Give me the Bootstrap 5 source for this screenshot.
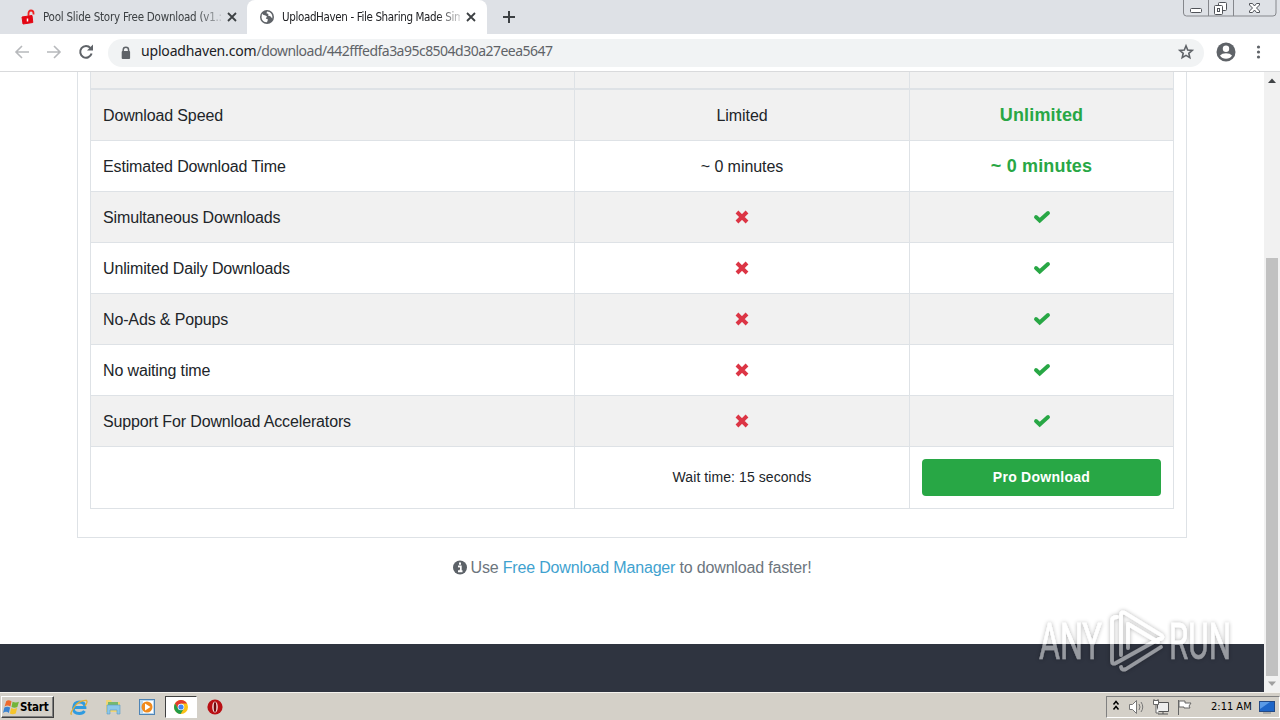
<!DOCTYPE html>
<html lang="en">
<head>
<meta charset="utf-8">
<meta name="viewport" content="width=device-width, initial-scale=1">
<title>UploadHaven - File Sharing Made Simple</title>
<link rel="stylesheet" href="https://cdn.jsdelivr.net/npm/bootstrap@5.3.0/dist/css/bootstrap.min.css">
<style>
body{width:1280px;height:720px;overflow:hidden;font-family:"Liberation Sans",Arial,sans-serif;font-size:16px;line-height:1.5;color:#212529;background:#fff}
svg{display:block;flex:none}
.tabstrip{height:34px;background:#dee1e6;font:11.5px/34px "DejaVu Sans Condensed",Tahoma,sans-serif;color:#3c4043}
.tab-off{width:247px;padding-left:21px}
.tab-on{width:240px;background:#fff;border-radius:8px 8px 0 0;padding-left:13px;color:#202124}
.tab-label{width:178px;white-space:nowrap;-webkit-mask-image:linear-gradient(90deg,#000 155px,transparent 184px);mask-image:linear-gradient(90deg,#000 155px,transparent 184px)}
.l1{letter-spacing:-.23px}.l2{letter-spacing:-.36px}
.toolbar{height:38px;border-bottom:1px solid #d9dadc;background:#fff}
.omnibox{width:1096px;height:28px;border-radius:14px;background:#f1f3f4;font:14px/28px "Noto Sans",Tahoma,sans-serif;color:#5f6368;letter-spacing:-.52px}
.omnibox b{font-weight:400;color:#202124;letter-spacing:-.17px}
.url{padding:0 0 0 1px;line-height:26px}
.page{height:620px}
.view{width:1264px;overflow:hidden}
.panel{width:1110px;margin-left:77px;border:1px solid #dee2e6;border-top:0;padding:0 12px 28px}
.plans{width:1084px;table-layout:fixed;border-collapse:separate;border-spacing:0;border-left:1px solid #dee2e6;color:#212529}
.plans td,.plans th{border-right:1px solid #dee2e6;border-bottom:1px solid #dee2e6;padding:1px 12px 0;height:51px;line-height:49px;text-align:center;font-weight:400;letter-spacing:-.05px}
.plans th{height:18px;border-bottom-width:2px;background:#f1f1f1;padding:0;line-height:10px}
.plans td:first-child{text-align:left;letter-spacing:-.14px}
.plans tbody tr:nth-child(odd) td{background:#f1f1f1}
.plans .fin td{height:62px;background:#fff;font-size:14px;line-height:20px;letter-spacing:.08px;padding-top:0}
.plans .fin td:nth-child(2){padding-bottom:1px}
.plans td.pro{font-size:18px;font-weight:700;color:#28a745;letter-spacing:.17px;padding-top:0;line-height:50px}
.plans svg{margin:0 auto 2px}
.btn-pro{height:37px;padding:0;background:#28a745;color:#fff;border:0;border-radius:4px;font-size:14px;font-weight:700;letter-spacing:.27px;line-height:37px}
.hint{height:106px;padding-top:18px;color:#6c757d;letter-spacing:-.17px}
.hint a{color:#3fa2cf}
.foot{height:48px;background:#2f3440}
.scroller{width:16px;background:#f1f1f1}
.thumb{width:12px;height:418px;margin-top:169px;background:#c1c1c1}
.taskbar{height:28px;background:#d4d0c8;border-top:1px solid #f4f2ee;font:11px/20px "DejaVu Sans Condensed",Tahoma,sans-serif;color:#000}
.start{width:53px;height:22px;margin:0 4px 0 1px;border:1px solid;border-color:#fff #404040 #404040 #fff;box-shadow:inset -1px -1px #808080;font-weight:700;font-size:11.5px;letter-spacing:-.2px;padding-left:1px}
.active-app{width:32px;height:22px;background:#fff;border:1px solid;border-color:#404040 #fff #fff #404040}
.tray{width:174px;height:22px;border:1px solid;border-color:#808080 #fff #fff #808080}
.wm{left:1030px;top:600px}
.winbtns{right:0;top:0}
</style>
</head>
<body class="position-relative d-flex flex-column">
<svg width="0" height="0" class="position-absolute"><defs>
<symbol id="no" viewBox="0 0 14 14"><path d="M3.400 3.400l7.200 7.200m0-7.200l-7.200 7.200" stroke="#dc3545" stroke-width="4" stroke-linecap="square" fill="none" stroke-linejoin="round"/></symbol>
<symbol id="yes" viewBox="0 0 18 14"><path d="M3 7l3.700 3.500L15 3" stroke="#28a745" stroke-width="3.900" stroke-linecap="round" fill="none"/></symbol>
</defs></svg>

<header class="tabstrip d-flex">
  <div class="tab-off d-flex align-items-center">
    <svg width="14" height="16" viewBox="0 0 14 16"><path d="M1 8l10-1.500 .8 7L2 15z" fill="#e30613" stroke="#e30613" stroke-linejoin="round"/><path d="M7.500 7V4.500Q7.500 1.500 10 1.500T12.500 4.200V5.500" fill="none" stroke="#e22" stroke-width="1.800"/><path d="M6.500 9.500v3" stroke="#fff" stroke-width="1.500"/></svg>
    <span class="tab-label l1 ms-2">Pool Slide Story Free Download (v1.:</span>
    <svg class="ms-1" width="14" height="12" viewBox="0 0 14 12"><path d="M3 2l8 8m0-8l-8 8" stroke="#3c4043" stroke-width="1.800"/></svg>
  </div>
  <div class="tab-on d-flex align-items-center">
    <svg width="14" height="14" viewBox="0 0 14 14"><circle cx="7" cy="7" r="7" fill="#5f6368"/><path d="M2 3.500Q3 5.500 5 5.300L7 6.500 5.800 8.600 8 9.500 7 12.300Q2 12 1.500 7.500M7 1.600L6.500 3.200 8.500 4 8 5.500 10.300 6.200 12.300 8.500Q13 4 9.500 2" fill="#fff"/></svg>
    <span class="tab-label l2 ms-2">UploadHaven - File Sharing Made Sim</span>
    <svg class="ms-1" width="14" height="12" viewBox="0 0 14 12"><path d="M3 2l8 8m0-8l-8 8" stroke="#3c4043" stroke-width="1.800"/></svg>
  </div>
  <svg class="ms-3 mt-2" width="14" height="18" viewBox="0 0 14 18"><path d="M0 9h12M6 3v12" stroke="#3c4043" stroke-width="2"/></svg>
</header>

<nav class="toolbar d-flex align-items-center">
  <svg width="108" height="34" viewBox="0 0 108 34" fill="none"><path d="M29 16H16m6-6l-6 6 6 6M47 16h13m-6-6l6 6-6 6" stroke="#b7b9bc" stroke-width="1.600"/><path d="M90.500 12.200A5.800 5.800 0 1 0 91.600 17.500" stroke="#5f6368" stroke-width="2"/><path d="M93 8.500v6h-6z" fill="#5f6368"/></svg>
  <div class="omnibox d-flex align-items-center">
    <svg class="ms-2 me-2" width="16" height="16" viewBox="0 0 16 16"><path d="M7.500 7V5a2.700 2.700 0 0 1 5.400 0V7" transform="translate(-.3 0)" fill="none" stroke="#5f6368" stroke-width="1.500"/><rect x="5.700" y="6" width="8.400" height="8" rx="1" fill="#5f6368"/></svg>
    <span class="url pb-1"><b>uploadhaven.com</b>/download/442fffedfa3a95c8504d30a27eea5647</span>
    <svg class="ms-auto me-2 mb-1" width="20" height="20" viewBox="0 0 20 20"><path d="M10 4.800l1.700 4.200 4.500.4-3.400 2.900 1 4.400L10 14.400l-3.800 2.300 1-4.400-3.400-2.900 4.500-.4z" fill="none" stroke="#5f6368" stroke-width="1.600"/></svg>
  </div>
  <svg width="76" height="34" viewBox="0 0 76 34"><g transform="translate(0 -1)"><circle cx="22" cy="17" r="9.500" fill="#5f6368"/><circle cx="22" cy="13.700" r="3.200" fill="#fff"/><path d="M16 20.500Q18 18.300 22 18.300T28 20.500Q26 23.800 22 23.800T16 20.500" fill="#fff"/><g fill="#5f6368"><circle cx="54.500" cy="12" r="1.600"/><circle cx="54.500" cy="17" r="1.600"/><circle cx="54.500" cy="22" r="1.600"/></g></g></svg>
</nav>

<div class="page d-flex">
  <main class="view">
    <section class="panel">
      <table class="plans">
        <colgroup><col style="width:484px"><col style="width:335px"><col style="width:264px"></colgroup>
        <thead><tr><th></th><th></th><th></th></tr></thead>
        <tbody>
          <tr><td>Download Speed</td><td>Limited</td><td class="pro">Unlimited</td></tr>
          <tr><td>Estimated Download Time</td><td>~ 0 minutes</td><td class="pro">~ 0 minutes</td></tr>
          <tr><td>Simultaneous Downloads</td><td><svg width="14" height="14"><use href="#no"/></svg></td><td><svg width="18" height="14"><use href="#yes"/></svg></td></tr>
          <tr><td>Unlimited Daily Downloads</td><td><svg width="14" height="14"><use href="#no"/></svg></td><td><svg width="18" height="14"><use href="#yes"/></svg></td></tr>
          <tr><td>No-Ads &amp; Popups</td><td><svg width="14" height="14"><use href="#no"/></svg></td><td><svg width="18" height="14"><use href="#yes"/></svg></td></tr>
          <tr><td>No waiting time</td><td><svg width="14" height="14"><use href="#no"/></svg></td><td><svg width="18" height="14"><use href="#yes"/></svg></td></tr>
          <tr><td>Support For Download Accelerators</td><td><svg width="14" height="14"><use href="#no"/></svg></td><td><svg width="18" height="14"><use href="#yes"/></svg></td></tr>
          <tr class="fin"><td></td><td>Wait time: 15 seconds</td><td><button class="btn btn-pro w-100 d-block">Pro Download</button></td></tr>
        </tbody>
      </table>
    </section>
    <div class="hint d-flex justify-content-center align-items-start">
      <svg class="mt-1 me-1" width="14" height="16" viewBox="0 0 14 16"><circle cx="7" cy="7.500" r="7" fill="#5c6268"/><path d="M7 2.400v2.300M5 6.600h2.700v4.500M5 11.200h4.500" stroke="#fff" stroke-width="2"/></svg>
      <span>Use <a class="text-decoration-none" href="#">Free Download Manager</a> to download faster!</span>
    </div>
    <footer class="foot"></footer>
  </main>
  <aside class="scroller d-flex flex-column align-items-center">
    <svg width="16" height="17" viewBox="0 0 16 17"><path d="M4 11l4-4.500 4 4.500z" fill="#404346"/></svg>
    <div class="thumb"></div>
    <svg width="16" height="16" viewBox="0 0 16 16"><path d="M4 5.500l4 4.500 4-4.500z" fill="#a0a0a0"/></svg>
  </aside>
</div>

<footer class="taskbar d-flex align-items-center">
  <div class="start d-flex align-items-center">
    <svg width="17" height="17" viewBox="0 0 16 16"><path d="M3 3Q5 1 8 3L7 8Q4 6 1.500 8z" fill="#ee6a2c"/><path d="M9 3.500Q12 5 15 3.500L13.500 8.500Q11 10 8 8.500z" fill="#73b43a"/><path d="M1.300 9Q4 7.500 6.700 9L5.500 14Q3 12 0 14z" fill="#3b83d0"/><path d="M7.700 9.500Q10 11 13.300 9.500L12 14.500Q9 16 6.500 14.500z" fill="#f5c52c"/></svg>
    <span>Start</span>
  </div>
  <svg width="107" height="24" viewBox="1 0 107 24">
    <g fill="none"><path d="M16 12.500h12Q28 7 22.500 7T16.500 12.800 22.500 18.500Q26 18.500 27.500 16" stroke="#2f9be0" stroke-width="2.800"/><path d="M15 19Q12 20 17 12.500T29.500 5.500Q31 7 28 11" stroke="#e3ae35" stroke-width="1.300"/></g>
    <path d="M49 5h5l1 2h8v10H49z" fill="#f0d576"/><path d="M51 7h10v4H51z" fill="#76b96e"/><path d="M50 10h13v9h-3v-4h-7v4h-3z" fill="#8cc8ea" stroke="#5a9cc5" stroke-width=".6"/>
    <rect x="82.500" y="4.500" width="15" height="15" fill="#b9d7ef" stroke="#4f84b5"/><rect x="86" y="6" width="10" height="12" fill="#fff"/><circle cx="90" cy="12" r="5.500" fill="#f08a1d"/><path d="M88 8.500l5.500 3.500-5.500 3.500z" fill="#fff"/>
  </svg>
  <div class="active-app d-flex align-items-center justify-content-center">
    <svg width="14" height="14" viewBox="0 0 14 14"><circle cx="7" cy="7" r="7" fill="#fbc116"/><path d="M1 3.500A7 7 0 0 1 13 3.500H7L4 8.700z" fill="#e33b2e"/><path d="M1 3.500A7 7 0 0 0 6.600 14L9.900 8.600H4z" fill="#229b48"/><circle cx="7" cy="7" r="3.300" fill="#fff"/><circle cx="7" cy="7" r="2.600" fill="#4285f4"/></svg>
  </div>
  <svg class="ms-2" width="20" height="20" viewBox="0 0 20 20"><circle cx="10" cy="10" r="7.600" fill="#b90f14"/><ellipse cx="10" cy="10" rx="2.800" ry="5.500" fill="#f5dada"/><ellipse cx="10" cy="10" rx="1.300" ry="5" fill="#70090d"/></svg>
  <div class="tray d-flex align-items-center ms-auto">
    <svg width="92" height="20" viewBox="0 0 92 20" fill="none"><path d="M6.500 7.500l2.500-3 2.500 3m-5 5l2.500-3 2.500 3" stroke="#000" stroke-width="1.500"/><path d="M22.500 7.500h3l4-4v13l-4-4h-3z" fill="#fff" stroke="#777"/><path d="M32 7q2 3 0 6m2-8q3.500 5 0 10" stroke="#777"/><path d="M50.500 5.500h11v9h-11zM51 17h10M56 15v2" fill="#eee" stroke="#555"/><path d="M46.500 3.500h5v4h-5zM47 2v2m4-2v2m-2 4v8h3" fill="#fff" stroke="#666"/><path d="M71.500 3v15M72 4h6v2h6l-2 3 1 2h-6V10h-5z" fill="#fff" stroke="#666"/></svg>
    <span class="clock ms-2 ps-1">2:11 AM</span>
    <svg class="ms-auto me-1" width="16" height="16" viewBox="0 0 16 16"><rect x=".5" y="2.500" width="15" height="10" fill="#1e66c8" stroke="#234a86"/><path d="M1 3h10L1 10z" fill="#5b9be6"/><path d="M4 14h8" stroke="#888"/></svg>
  </div>
</footer>

<svg class="winbtns position-absolute" width="98" height="18" viewBox="0 0 98 18" fill="none" stroke="#85878c"><path d="M1.500 0v13q0 3 3 3H91q3 0 3-3V0M26.500 0v16M51.500 0v16"/><g stroke="#505359"><rect x="8.500" y="8.500" width="11" height="4" rx="1" fill="#fff"/><rect x="36.500" y="2.500" width="8" height="8" rx="1" fill="#fff"/><rect x="32.500" y="5.500" width="8" height="9" rx="1" fill="#fff"/><rect x="35.500" y="8.500" width="2" height="3"/><path d="M67.500 3.500h3l2 2.500 2-2.500h3v1.500l-3 3 3 3v1.500h-3l-2-2.500-2 2.500h-3v-1.500l3-3-3-3z" fill="#fff"/></g></svg>

<svg class="wm position-absolute" width="210" height="80" viewBox="0 0 210 80">
  <defs><filter id="sh" x="-10%" y="-10%" width="120%" height="120%"><feDropShadow dx="0" dy="0" stdDeviation="2" flood-color="#000" flood-opacity=".62"/></filter></defs>
  <g filter="url(#sh)" opacity=".5"><g fill="#fff" stroke="#fff" stroke-width=".5" font-family="Roboto,sans-serif" font-size="50">
    <text x="9" y="59" textLength="63" lengthAdjust="spacingAndGlyphs">ANY</text><text x="139" y="59" textLength="62" lengthAdjust="spacingAndGlyphs">RUN</text></g>
    <g fill="none" stroke="#fff" stroke-width="3.800" stroke-linejoin="round" stroke-linecap="round"><path d="M87 17q-5 0-5 4v40q0 4 4 2l43-24"/><path d="M91 55V15q0-4 4-2l36 22q3 2 0 4"/><path d="M98 48V24l30 18"/><path d="M91 67q1 4 5 2l35-22"/></g></g>
</svg>
<script src="https://cdn.jsdelivr.net/npm/bootstrap@5.3.0/dist/js/bootstrap.bundle.min.js"></script>
</body>
</html>
